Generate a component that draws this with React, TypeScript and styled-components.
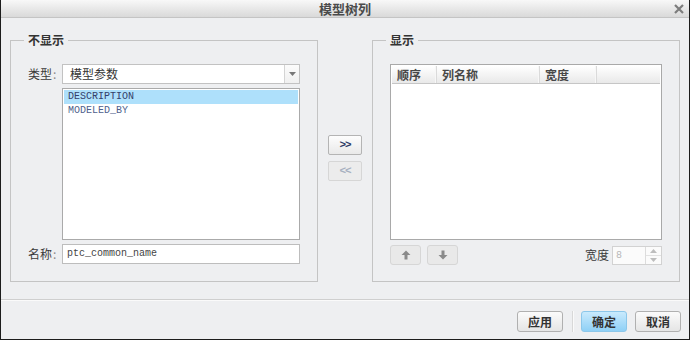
import React from "react";
import styled, { createGlobalStyle, css } from "styled-components";

const Global = createGlobalStyle`
  html, body { margin: 0; padding: 0; background: #ffffff; }
  body { font-family: "Noto Sans CJK SC", "Liberation Sans", sans-serif; }
  * { box-sizing: border-box; }
`;

const CJK = `"Noto Sans CJK SC", "Liberation Sans", sans-serif`;
const MONO = `"Liberation Mono", "DejaVu Sans Mono", monospace`;

const Window = styled.div`
  width: 690px;
  height: 340px;
  background: #eeeff1;
  border: 1px solid #1c1c1c;
  border-top: none;
  display: flex;
  flex-direction: column;
  overflow: hidden;
  font-family: ${CJK};
`;

const TitleBar = styled.div`
  height: 18px;
  flex: none;
  background: linear-gradient(#f8f8f8, #d9d9d9);
  border-bottom: 1px solid #c4c4c4;
  display: grid;
  grid-template-columns: 1fr auto 1fr;
  align-items: center;
`;

const Title = styled.div`
  grid-column: 2;
  font-size: 13px;
  font-weight: bold;
  color: #4a4a4a;
  line-height: 17px;
`;

const CloseBtn = styled.div`
  grid-column: 3;
  justify-self: end;
  width: 12px;
  height: 12px;
  margin-right: 4px;
  display: flex;
  align-items: center;
  justify-content: center;
`;

const Body = styled.div`
  flex: none;
  display: flex;
  padding: 15px 9px 0 9px;
  height: 264px;
`;

const Group = styled.fieldset<{ $padL: number }>`
  margin: 0;
  width: 308px;
  min-width: 0;
  border: 1px solid #c4c4c4;
  padding: 0 17px 16px ${(p) => p.$padL}px;
  display: block;
`;

const Legend = styled.legend`
  margin-left: -4px;
  padding: 0 4px;
  font-size: 12px;
  font-weight: bold;
  color: #333;
  line-height: 14px;
`;

const LeftContent = styled.div`
  margin-top: 17px;
  display: grid;
  grid-template-columns: 34px 238px;
  grid-template-rows: 20px 152px 20px;
  row-gap: 4px;
  align-items: center;
`;

const Label = styled.div`
  font-size: 12px;
  color: #3a3a3a;
  line-height: 16px;
  white-space: nowrap;
`;

const Colon = styled.span`
  color: #8a8a8a;
  margin-left: 1px;
`;

const Combo = styled.div`
  height: 20px;
  background: #fff;
  border: 1px solid #c2c2c2;
  display: flex;
  align-items: stretch;
`;

const ComboText = styled.div`
  flex: 1;
  font-size: 12px;
  color: #333;
  padding-left: 7px;
  line-height: 18px;
`;

const ComboBtn = styled.div`
  width: 15px;
  border-left: 1px solid #d4d4d4;
  background: linear-gradient(#fbfbfb, #f0f0f0);
  display: flex;
  align-items: center;
  justify-content: center;
`;

const ListBox = styled.div`
  grid-column: 2;
  align-self: stretch;
  background: #fff;
  border: 1px solid #aaaaaa;
  padding: 1px;
  margin-top: 0;
`;

const ListItem = styled.div<{ $selected?: boolean }>`
  height: 14px;
  font-family: ${MONO};
  font-size: 10px;
  line-height: 14px;
  padding-left: 4px;
  color: ${(p) => (p.$selected ? "#34406a" : "#4f5f8c")};
  background: ${(p) => (p.$selected ? "#aee0fb" : "transparent")};
`;

const TextInput = styled.div<{ $disabled?: boolean }>`
  height: 20px;
  background: ${(p) => (p.$disabled ? "#fbfbfb" : "#fff")};
  border: 1px solid ${(p) => (p.$disabled ? "#d2d2d2" : "#bdbdbd")};
  font-family: ${MONO};
  font-size: 10px;
  line-height: 18px;
  padding-left: 4px;
  color: ${(p) => (p.$disabled ? "#b5b5b5" : "#444")};
`;

const Middle = styled.div`
  width: 54px;
  flex: none;
  display: flex;
  flex-direction: column;
  align-items: center;
  justify-content: center;
  gap: 6px;
  padding-top: 1px;
`;

const MoveBtn = styled.div<{ $disabled?: boolean }>`
  width: 34px;
  height: 20px;
  border-radius: 2px;
  display: flex;
  align-items: center;
  justify-content: center;
  font-family: ${MONO};
  font-weight: bold;
  font-size: 11px;
  letter-spacing: -1px;
  ${(p) =>
    p.$disabled
      ? css`
          border: 1px solid #d6d6d6;
          background: #ececec;
          color: #a6b0c0;
        `
      : css`
          border: 1px solid #b4b4b4;
          background: linear-gradient(#fdfdfd, #e9e9e9);
          color: #2d3a66;
        `}
`;

const RightContent = styled.div`
  margin-top: 17px;
  display: flex;
  flex-direction: column;
  gap: 5px;
`;

const Table = styled.div`
  width: 272px;
  height: 176px;
  background: #fff;
  border: 1px solid #a9a9a9;
  padding: 1px;
`;

const HeaderRow = styled.div`
  height: 18px;
  display: flex;
  background: linear-gradient(#ffffff, #e9e9e9);
  border-bottom: 1px solid #c6c6c6;
`;

const HeaderCell = styled.div<{ $w?: number }>`
  ${(p) => (p.$w ? `width: ${p.$w}px; flex: none;` : "flex: 1;")}
  border-right: 1px solid #dadada;
  box-shadow: inset -1px 0 0 #f7f7f7;
  font-size: 12px;
  font-weight: bold;
  color: #474747;
  line-height: 17px;
  padding-left: 5px;
  &:last-child { border-right: none; box-shadow: none; }
`;

const ControlsRow = styled.div`
  height: 20px;
  display: flex;
  align-items: center;
`;

const ArrowBtn = styled.div`
  width: 31px;
  height: 20px;
  border: 1px solid #d6d6d6;
  border-radius: 3px;
  background: #e9e9e9;
  display: flex;
  align-items: center;
  justify-content: center;
  margin-right: 6px;
`;

const Spacer = styled.div`
  flex: 1;
`;

const SpinLabel = styled(Label)`
  margin-right: 3px;
`;

const Spin = styled.div`
  width: 50px;
  height: 19px;
  border: 1px solid #d2d2d2;
  background: #fbfbfb;
  display: flex;
  margin-right: 0;
`;

const SpinText = styled.div`
  flex: 1;
  font-family: ${MONO};
  font-size: 10px;
  color: #b8b8b8;
  line-height: 17px;
  padding-left: 3px;
`;

const SpinArrows = styled.div`
  width: 16px;
  border-left: 1px solid #dcdcdc;
  display: flex;
  flex-direction: column;
`;

const SpinHalf = styled.div`
  flex: 1;
  display: flex;
  align-items: center;
  justify-content: center;
  & + & { border-top: 1px solid #e2e2e2; }
`;

const Footer = styled.div`
  margin-top: 17px;
  flex: 1;
  border-top: 1px solid #cfcfcf;
  box-shadow: inset 0 1px 0 #fafafa;
  display: flex;
  justify-content: flex-end;
  align-items: flex-start;
  padding: 11px 8px 0 0;
`;

const DlgBtn = styled.div<{ $primary?: boolean }>`
  width: 46px;
  height: 21px;
  border-radius: 3px;
  display: flex;
  align-items: center;
  justify-content: center;
  font-size: 12px;
  font-weight: bold;
  color: #333;
  ${(p) =>
    p.$primary
      ? css`
          border: 1px solid #8cc7ea;
          background: linear-gradient(#c9eafd, #8fd0f6);
        `
      : css`
          border: 1px solid #b0b0b0;
          background: linear-gradient(#fbfbfb, #e5e5e5);
        `}
`;

const Divider = styled.div`
  width: 1px;
  height: 21px;
  background: #d8d8d8;
  margin: 0 8px 0 9px;
  box-shadow: 1px 0 0 #fafafa;
`;

const BtnGap = styled.div`
  width: 8px;
`;

const TriDown = ({ color = "#777" }: { color?: string }) => (
  <svg width="7" height="4" viewBox="0 0 7 4">
    <path d="M0 0 H7 L3.5 4 Z" fill={color} />
  </svg>
);

const TriUp = ({ color = "#777" }: { color?: string }) => (
  <svg width="7" height="4" viewBox="0 0 7 4">
    <path d="M0 4 H7 L3.5 0 Z" fill={color} />
  </svg>
);

const ArrowUpIcon = () => (
  <svg width="10" height="10" viewBox="0 0 10 10">
    <path d="M5 0.5 L9.5 5 H6.5 V9.5 H3.5 V5 H0.5 Z" fill="#8a8a8a" />
  </svg>
);

const ArrowDownIcon = () => (
  <svg width="10" height="10" viewBox="0 0 10 10">
    <path d="M5 9.5 L9.5 5 H6.5 V0.5 H3.5 V5 H0.5 Z" fill="#8a8a8a" />
  </svg>
);

const CloseIcon = () => (
  <svg width="10" height="10" viewBox="0 0 10 10">
    <path d="M1 1 L9 9 M9 1 L1 9" stroke="#7d7d7d" strokeWidth="2.2" />
  </svg>
);

export default function App() {
  return (
    <>
      <Global />
      <Window>
        <TitleBar>
          <Title>模型树列</Title>
          <CloseBtn>
            <CloseIcon />
          </CloseBtn>
        </TitleBar>
        <Body>
          <Group $padL={17}>
            <Legend>不显示</Legend>
            <LeftContent>
              <Label>
                类型<Colon>:</Colon>
              </Label>
              <Combo>
                <ComboText>模型参数</ComboText>
                <ComboBtn>
                  <TriDown />
                </ComboBtn>
              </Combo>
              <ListBox>
                <ListItem $selected>DESCRIPTION</ListItem>
                <ListItem>MODELED_BY</ListItem>
              </ListBox>
              <Label>
                名称<Colon>:</Colon>
              </Label>
              <TextInput>ptc_common_name</TextInput>
            </LeftContent>
          </Group>
          <Middle>
            <MoveBtn>&gt;&gt;</MoveBtn>
            <MoveBtn $disabled>&lt;&lt;</MoveBtn>
          </Middle>
          <Group $padL={17}>
            <Legend>显示</Legend>
            <RightContent>
              <Table>
                <HeaderRow>
                  <HeaderCell $w={45}>顺序</HeaderCell>
                  <HeaderCell $w={103}>列名称</HeaderCell>
                  <HeaderCell $w={57}>宽度</HeaderCell>
                  <HeaderCell />
                </HeaderRow>
              </Table>
              <ControlsRow>
                <ArrowBtn>
                  <ArrowUpIcon />
                </ArrowBtn>
                <ArrowBtn>
                  <ArrowDownIcon />
                </ArrowBtn>
                <Spacer />
                <SpinLabel>宽度</SpinLabel>
                <Spin>
                  <SpinText>8</SpinText>
                  <SpinArrows>
                    <SpinHalf>
                      <TriUp color="#bdbdbd" />
                    </SpinHalf>
                    <SpinHalf>
                      <TriDown color="#bdbdbd" />
                    </SpinHalf>
                  </SpinArrows>
                </Spin>
              </ControlsRow>
            </RightContent>
          </Group>
        </Body>
        <Footer>
          <DlgBtn>应用</DlgBtn>
          <Divider />
          <DlgBtn $primary>确定</DlgBtn>
          <BtnGap />
          <DlgBtn>取消</DlgBtn>
        </Footer>
      </Window>
    </>
  );
}
